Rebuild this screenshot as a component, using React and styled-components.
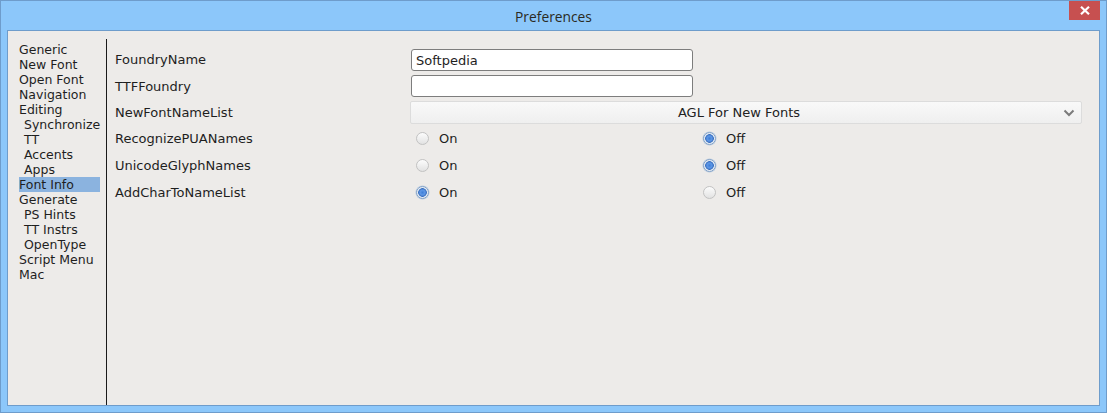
import React from "react";
import styled, { createGlobalStyle } from "styled-components";

const Global = createGlobalStyle`
  html, body { margin: 0; padding: 0; }
  body { width: 1107px; height: 413px; overflow: hidden; background: #8ac5f8; }
  * { box-sizing: border-box; }
`;

const Window = styled.div`
  width: 1107px;
  height: 413px;
  border: 1px solid #6e9ccb;
  background: #8cc7fa;
  display: flex;
  flex-direction: column;
`;

const TitleBar = styled.div`
  height: 29px;
  flex: none;
  position: relative;
  display: flex;
  align-items: center;
  justify-content: center;
`;

const Title = styled.div`
  font-family: "Open Sans", "DejaVu Sans", sans-serif;
  font-size: 13.8px;
  color: #2a2a22;
  margin-top: 1px;
`;

const CloseButton = styled.div`
  position: absolute;
  top: 0;
  right: 6px;
  width: 31px;
  height: 19px;
  background: #c75050;
  display: flex;
  align-items: center;
  justify-content: center;
`;

const Client = styled.div`
  flex: 1;
  margin: 0 6px 6px 6px;
  border: 1px solid #6e9ccb;
  background: #edebe9;
  display: flex;
  font-family: "DejaVu Sans", sans-serif;
  font-size: 12.5px;
  color: #1e1e1e;
`;

const Nav = styled.div`
  width: 98px;
  flex: none;
  padding: 11px 0 0 11px;
  display: flex;
  flex-direction: column;
`;

const NavItem = styled.div`
  width: 81px;
  height: 15px;
  line-height: 15px;
  padding-left: ${(p) => (p.$sub ? 5 : 0)}px;
  white-space: nowrap;
  background: ${(p) => (p.$active ? "#8bb3df" : "transparent")};
`;

const Separator = styled.div`
  width: 1px;
  flex: none;
  margin-top: 8px;
  background: #1a1a1a;
`;

const Content = styled.div`
  flex: 1;
  padding: 15px 17px 0 8px;
  display: flex;
  flex-direction: column;
  font-size: 13px;
`;

const Row = styled.div`
  height: ${(p) => p.$h}px;
  display: grid;
  grid-template-columns: 296px 1fr;
  align-items: center;
`;

const Label = styled.div`
  white-space: nowrap;
`;

const TextInput = styled.div`
  width: 282px;
  height: 22px;
  background: #fff;
  border: 1px solid #7d7d7d;
  border-radius: 3px;
  padding: 2px 0 0 4px;
  display: flex;
  align-items: center;
`;

const Select = styled.div`
  margin-left: -1px;
  height: 23px;
  border: 1px solid #dcdcdc;
  border-radius: 2px;
  background: linear-gradient(#f9f9f9, #efefef);
  display: flex;
  align-items: center;
  position: relative;
  padding-right: 14px;
`;

const SelectText = styled.div`
  flex: 1;
  text-align: center;
  color: #222;
`;

const Chevron = styled.svg`
  position: absolute;
  right: 6px;
  top: 7px;
`;

const RadioGroup = styled.div`
  display: grid;
  grid-template-columns: 287px 1fr;
  align-items: center;
`;

const RadioOption = styled.div`
  display: flex;
  align-items: center;
  padding-left: 5px;
  gap: 10px;
`;

const RadioCircle = styled.div`
  width: 13px;
  height: 13px;
  border-radius: 50%;
  border: 1px solid ${(p) => (p.$checked ? "#7f9fc6" : "#c2c2c2")};
  background: ${(p) =>
    p.$checked
      ? "radial-gradient(circle at 50% 50%, #3f7fd8 0, #5d97e6 2.5px, #3a6fc0 4px, #dfe8f2 4.6px, #f4f6f8 6px)"
      : "linear-gradient(#fcfcfc, #e2e2e2)"};
  box-shadow: ${(p) => (p.$checked ? "0 0 0 0.5px #b9cbe0" : "none")};
  flex: none;
`;

const navItems = [
  ["Generic", false],
  ["New Font", false],
  ["Open Font", false],
  ["Navigation", false],
  ["Editing", false],
  ["Synchronize", true],
  ["TT", true],
  ["Accents", true],
  ["Apps", true],
  ["Font Info", false, true],
  ["Generate", false],
  ["PS Hints", true],
  ["TT Instrs", true],
  ["OpenType", true],
  ["Script Menu", false],
  ["Mac", false],
];

const Radio = ({ label, checked }) => (
  <RadioOption>
    <RadioCircle $checked={checked} />
    <span>{label}</span>
  </RadioOption>
);

const radioRows = [
  ["RecognizePUANames", false],
  ["UnicodeGlyphNames", false],
  ["AddCharToNameList", true],
];

export default function App() {
  return (
    <>
      <Global />
      <Window>
        <TitleBar>
          <Title>Preferences</Title>
          <CloseButton>
            <svg width="10" height="9" viewBox="0 0 10 9">
              <path d="M1 0.8 L9 8.2 M9 0.8 L1 8.2" stroke="#fff" strokeWidth="2.2" />
            </svg>
          </CloseButton>
        </TitleBar>
        <Client>
          <Nav>
            {navItems.map(([name, sub, active]) => (
              <NavItem key={name} $sub={sub} $active={active}>
                {name}
              </NavItem>
            ))}
          </Nav>
          <Separator />
          <Content>
            <Row $h={27}>
              <Label>FoundryName</Label>
              <TextInput>Softpedia</TextInput>
            </Row>
            <Row $h={26}>
              <Label>TTFFoundry</Label>
              <TextInput />
            </Row>
            <Row $h={26}>
              <Label>NewFontNameList</Label>
              <Select>
                <SelectText>AGL For New Fonts</SelectText>
                <Chevron width="12" height="8" viewBox="0 0 12 8">
                  <path d="M1.5 1.5 L6 6 L10.5 1.5" fill="none" stroke="#7b7b7b" strokeWidth="2" />
                </Chevron>
              </Select>
            </Row>
            {radioRows.map(([name, on]) => (
              <Row key={name} $h={27}>
                <Label>{name}</Label>
                <RadioGroup>
                  <Radio label="On" checked={on} />
                  <Radio label="Off" checked={!on} />
                </RadioGroup>
              </Row>
            ))}
          </Content>
        </Client>
      </Window>
    </>
  );
}
